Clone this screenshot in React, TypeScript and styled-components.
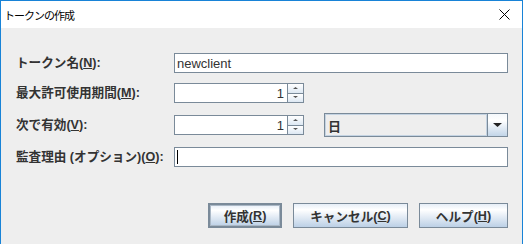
import React from "react";
import styled, { createGlobalStyle } from "styled-components";

const Global = createGlobalStyle`
  html, body { margin: 0; padding: 0; background: #ffffff; overflow: hidden; }
  body { font-family: "Liberation Sans", "Noto Sans CJK JP", sans-serif; }
`;

const Window = styled.div`
  width: 521px;
  height: 243px;
  border: 1px solid #1883d7;
  border-bottom: none;
  background: #eeeeee;
  display: flex;
  flex-direction: column;
  overflow: hidden;
`;

const TitleBar = styled.div`
  height: 27px;
  flex: none;
  background: #ffffff;
  display: flex;
  align-items: center;
  justify-content: space-between;
  padding: 0 12px 0 3px;
`;

const TitleText = styled.span`
  font-family: "Noto Sans CJK JP", sans-serif;
  font-size: 11px;
  letter-spacing: -1px;
  color: #000;
  line-height: 1;
  margin-top: 1px;
`;

const Content = styled.div`
  padding: 25px 14px 0 15px;
  display: flex;
  flex-direction: column;
`;

const Form = styled.div`
  display: grid;
  grid-template-columns: 158px 1fr;
  row-gap: 10px;
  align-items: center;
`;

const Label = styled.label`
  font-size: 12.6px;
  font-weight: bold;
  color: #333333;
  white-space: nowrap;
  line-height: 1;
`;

const U = styled.span`
  text-decoration: underline;
`;

const TextField = styled.div<{ $align?: "left" | "right"; $w?: number }>`
  box-sizing: border-box;
  height: 20px;
  width: ${(p) => (p.$w ? `${p.$w}px` : "100%")};
  background: #ffffff;
  border: 1px solid #7a8a99;
  display: flex;
  align-items: center;
  justify-content: ${(p) => (p.$align === "right" ? "flex-end" : "flex-start")};
  padding: 0 3px 0 2px;
  font-size: 13px;
  color: #333333;
`;

const Caret = styled.span`
  width: 1px;
  height: 14px;
  background: #000;
`;

const Spinner = styled.div`
  display: flex;
  width: 130px;
`;

const SpinButtons = styled.div`
  display: flex;
  flex-direction: column;
  width: 16px;
  height: 20px;
`;

const SpinButton = styled.div`
  box-sizing: border-box;
  flex: 1;
  border: 1px solid #7a8a99;
  border-left: none;
  background: linear-gradient(#ffffff, #dde8f3);
  display: flex;
  align-items: center;
  justify-content: center;
  & + & { border-top: none; }
`;

const Row3 = styled.div`
  display: flex;
  align-items: center;
  gap: 20px;
`;

const Combo = styled.div`
  box-sizing: border-box;
  flex: 1;
  height: 24px;
  border: 1px solid #7a8a99;
  display: flex;
  background: #eeeeee;
`;

const ComboValue = styled.div`
  flex: 1;
  border: 1px solid #c4d3e2;
  display: flex;
  align-items: center;
  padding-left: 2px;
  font-family: "Noto Sans CJK JP", sans-serif;
  font-size: 13px;
  font-weight: bold;
  color: #333333;
`;

const ComboArrow = styled.div`
  width: 19px;
  border-left: 1px solid #7a8a99;
  background: linear-gradient(#f4f8fb, #ffffff 30%, #c2d5e8);
  display: flex;
  align-items: center;
  justify-content: center;
`;

const ButtonRow = styled.div`
  display: flex;
  justify-content: flex-end;
  gap: 11px;
  margin-top: 36px;
`;

const Button = styled.div<{ $w: number; $default?: boolean }>`
  box-sizing: border-box;
  width: ${(p) => p.$w}px;
  height: 25px;
  border: ${(p) => (p.$default ? "2px solid #7a8a99" : "1px solid #7a8a99")};
  box-shadow: ${(p) => (p.$default ? "inset 0 0 0 1px #aab8c6" : "none")};
  background: linear-gradient(#e6eef7, #ffffff 25%, #bcd0e6);
  display: flex;
  align-items: center;
  justify-content: center;
  font-size: 12.6px;
  font-weight: bold;
  color: #333333;
  white-space: nowrap;
`;

const Tri = ({ up, size = 3 }: { up?: boolean; size?: number }) => (
  <svg width={size * 2 + 1} height={size + 1} viewBox={`0 0 ${size * 2 + 1} ${size + 1}`}>
    <polygon
      points={up ? `0,${size} ${size * 2 + 1},${size} ${size + 0.5},0` : `0,0 ${size * 2 + 1},0 ${size + 0.5},${size}`}
      fill={size > 3 ? "#222" : "#555"}
    />
  </svg>
);

const NumberSpinner = () => (
  <Spinner>
    <TextField $align="right" $w={114}>1</TextField>
    <SpinButtons>
      <SpinButton><Tri up size={2} /></SpinButton>
      <SpinButton><Tri size={2} /></SpinButton>
    </SpinButtons>
  </Spinner>
);

export default function App() {
  return (
    <>
      <Global />
      <Window>
        <TitleBar>
          <TitleText>トークンの作成</TitleText>
          <svg width="11" height="11" viewBox="0 0 11 11">
            <path d="M0.5 0.5 L10.5 10.5 M10.5 0.5 L0.5 10.5" stroke="#000" strokeWidth="1" />
          </svg>
        </TitleBar>
        <Content>
          <Form>
            <Label>
              トークン名(<U>N</U>):
            </Label>
            <TextField>newclient</TextField>

            <Label>
              最大許可使用期間(<U>M</U>):
            </Label>
            <NumberSpinner />

            <Label>
              次で有効(<U>V</U>):
            </Label>
            <Row3>
              <NumberSpinner />
              <Combo>
                <ComboValue>日</ComboValue>
                <ComboArrow><Tri size={4} /></ComboArrow>
              </Combo>
            </Row3>

            <Label>
              監査理由 (オプション)(<U>O</U>):
            </Label>
            <TextField><Caret /></TextField>
          </Form>
          <ButtonRow>
            <Button $w={74} $default>作成(<U>R</U>)</Button>
            <Button $w={115}>キャンセル(<U>C</U>)</Button>
            <Button $w={89}>ヘルプ(<U>H</U>)</Button>
          </ButtonRow>
        </Content>
      </Window>
    </>
  );
}
